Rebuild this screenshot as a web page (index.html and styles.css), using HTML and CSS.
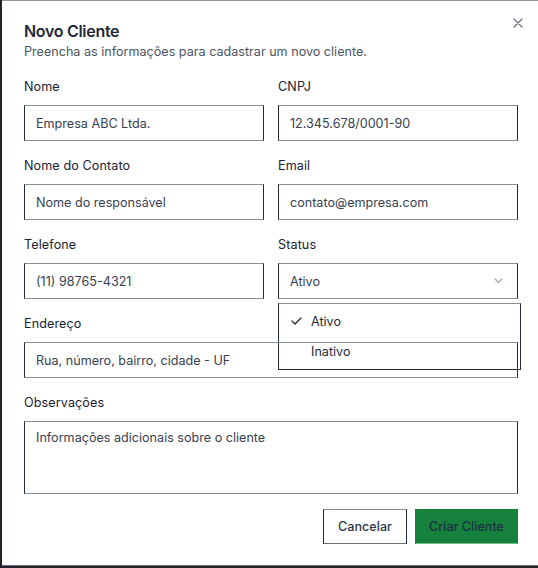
FILE: index.html
```html
<!DOCTYPE html>
<html lang="pt-BR">
<head>
<meta charset="utf-8">
<title>Novo Cliente</title>
<link rel="stylesheet" href="styles.css">
</head>
<body>
<div class="dialog">
  <button class="close" aria-label="Fechar">
    <svg width="10" height="10" viewBox="0 0 10 10"><path d="M1 1L9 9M9 1L1 9" stroke="#6b7280" stroke-width="1.3" fill="none" stroke-linecap="round"/></svg>
  </button>
  <header class="head">
    <h1 class="title">Novo Cliente</h1>
    <p class="subtitle">Preencha as informações para cadastrar um novo cliente.</p>
  </header>
  <form class="form">
    <div class="grid">
      <div class="field">
        <label class="label">Nome</label>
        <div class="input">Empresa ABC Ltda.</div>
      </div>
      <div class="field">
        <label class="label">CNPJ</label>
        <div class="input">12.345.678/0001-90</div>
      </div>
      <div class="field">
        <label class="label">Nome do Contato</label>
        <div class="input">Nome do responsável</div>
      </div>
      <div class="field">
        <label class="label">Email</label>
        <div class="input">contato@empresa.com</div>
      </div>
      <div class="field">
        <label class="label">Telefone</label>
        <div class="input">(11) 98765-4321</div>
      </div>
      <div class="field select-field">
        <label class="label">Status</label>
        <div class="input select">
          <span>Ativo</span>
          <svg class="chev" width="9" height="6" viewBox="0 0 9 6"><path d="M1 1l3.5 3.5L8 1" stroke="#9ca3af" stroke-width="1.1" fill="none" stroke-linecap="round" stroke-linejoin="round"/></svg>
        </div>
        <div class="menu">
          <div class="option">
            <svg class="check" width="11" height="8" viewBox="0 0 11 8"><path d="M1 4l3 3 6-6" stroke="#1f2937" stroke-width="1.3" fill="none" stroke-linecap="round" stroke-linejoin="round"/></svg>
            <span>Ativo</span>
          </div>
          <div class="option"><span>Inativo</span></div>
        </div>
      </div>
    </div>
    <div class="field full over">
      <label class="label">Endereço</label>
      <div class="input clear">Rua, número, bairro, cidade - UF</div>
    </div>
    <div class="field full">
      <label class="label">Observações</label>
      <div class="input textarea">Informações adicionais sobre o cliente</div>
    </div>
    <div class="actions">
      <button type="button" class="btn btn-outline">Cancelar</button>
      <button type="button" class="btn btn-primary">Criar Cliente</button>
    </div>
  </form>
</div>
</body>
</html>
```

FILE: styles.css
```css
* { box-sizing: border-box; }
html, body { margin: 0; padding: 0; }
body {
  background: #202328;
  width: 538px;
  height: 568px;
  overflow: hidden;
  font-family: Inter, "Liberation Sans", sans-serif;
  color: #1f2937;
}
.dialog {
  position: relative;
  margin-left: 2px;
  width: 540px;
  height: 566px;
  background: #ffffff;
  border-top: 1px solid #8f949b;
  border-bottom: 1px solid #6b7079;
  padding: 16px 20px 0 22px;
}
.close {
  position: absolute;
  top: 15px;
  right: 17px;
  width: 14px;
  height: 14px;
  padding: 2px;
  border: 0;
  background: transparent;
  display: flex;
  align-items: center;
  justify-content: center;
}
.head { margin-bottom: 18px; }
.title {
  margin: 0;
  font-size: 16px;
  line-height: 28px;
  font-weight: 600;
  color: #1f2937;
  letter-spacing: -0.3px;
}
.subtitle {
  margin: 0;
  font-size: 12.6px;
  line-height: 14px;
  color: #4b5563;
}
.form { width: 494px; display: flex; flex-direction: column; gap: 15px; }
.grid {
  display: grid;
  grid-template-columns: 240px 240px;
  column-gap: 14px;
  row-gap: 15px;
}
.field { display: flex; flex-direction: column; gap: 8px; }
.label {
  font-size: 12.6px;
  line-height: 20px;
  font-weight: 400;
  color: #1a2130;
  letter-spacing: 0.1px;
}
.input {
  height: 36px;
  border: 1px solid;
  border-color: #8a8f97 #1f2937 #8a8f97 #1f2937;
  background: #fff;
  padding: 0 11px;
  display: flex;
  align-items: center;
  font-size: 12.6px;
  color: #374151;
}
.input.clear { background: transparent; }
.select { justify-content: space-between; padding-right: 14px; }
.select-field { position: relative; }
.menu {
  position: absolute;
  top: 68px;
  left: 0;
  width: 243px;
  height: 67px;
  background: #fff;
  border: 1px solid;
  border-color: #8a8f97 #1f2937 #1f2937 #1f2937;
  padding: 2px 0;
}
.option {
  height: 30px;
  display: flex;
  align-items: center;
  padding-left: 32px;
  position: relative;
  font-size: 12.6px;
  color: #1f2937;
}
.check { position: absolute; left: 12px; top: 11px; }
.over { position: relative; }
.textarea {
  height: 73px;
  align-items: flex-start;
  padding-top: 8px;
}
.actions {
  display: flex;
  justify-content: flex-end;
  gap: 8px;
}
.btn {
  height: 35px;
  font-family: inherit;
  font-size: 12.6px;
  font-weight: 500;
  color: #2d3748;
  border: 1px solid;
  padding: 0;
  white-space: nowrap;
}
.btn-outline {
  width: 84px;
  background: #fff;
  border-color: #8a8f97 #1f2937 #6b7079 #1f2937;
}
.btn-primary {
  width: 103px;
  background: #16803d;
  border-color: #16803d #16803d #6fbf8c #16803d;
  color: #1f3044;
}
```
